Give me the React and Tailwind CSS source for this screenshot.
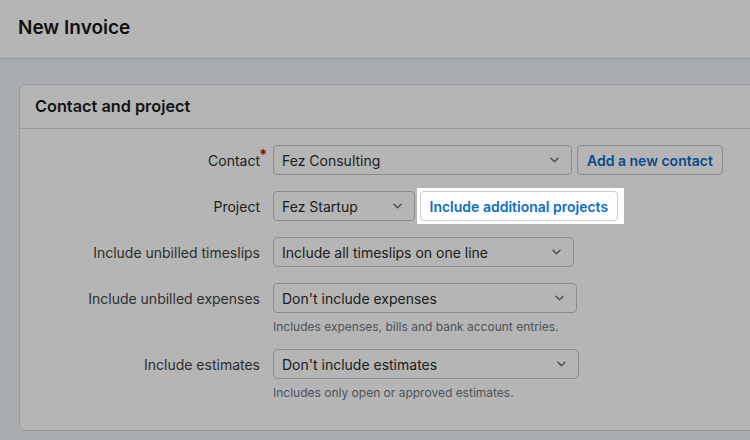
import React from "react";

function Chevron() {
  return (
    <svg width="9" height="6" viewBox="0 0 9 6" fill="none" className="shrink-0">
      <path d="M1 1.2l3.5 3.5 3.5-3.5" stroke="#6f7378" strokeWidth="1.5" strokeLinecap="round" strokeLinejoin="round" />
    </svg>
  );
}

function Select({ value, w }) {
  return (
    <div className={`flex h-[30px] items-center justify-between rounded-[4px] border border-[#c4c6c9] bg-white pl-[8px] pr-[12px] text-[14px] text-[#2b2b2b] ${w}`}>
      <span>{value}</span>
      <Chevron />
    </div>
  );
}

function Label({ children, required }) {
  return (
    <div className="relative w-[240px] shrink-0 text-right text-[14px] text-[#2e2e2e]">
      {children}
      {required && (
        <span className="absolute -right-[7px] -top-[6px] text-[14px] font-bold text-[#c40d0d]">*</span>
      )}
    </div>
  );
}

function Row({ label, required, children, help, className = "" }) {
  return (
    <div className={`flex items-start gap-[13px] ${className}`}>
      <div className="flex h-[30px] items-center">
        <Label required={required}>{label}</Label>
      </div>
      <div className="flex flex-col">
        <div className="flex items-center gap-[5px]">{children}</div>
        {help && (
          <div className="mt-[5px] h-[18px] text-[12px] leading-[18px] text-[#6c7782]">{help}</div>
        )}
      </div>
    </div>
  );
}

export default function App() {
  return (
    <div
      className="relative h-[440px] w-[750px] overflow-hidden bg-[#eff2f7]"
      style={{ fontFamily: "Inter, 'Noto Sans', sans-serif" }}
    >
      <div className="flex h-[59px] items-center border-b border-[#d9dbde] bg-white pb-[1px] pl-[18px]">
        <h1 className="text-[19px] font-semibold text-[#171717]">New Invoice</h1>
      </div>

      <div className="ml-[19px] mt-[25px] w-[760px] rounded-[6px] border border-[#d7dadd] bg-white">
        <div className="flex h-[44px] items-center border-b border-[#d7dadd] pl-[15px]">
          <h2 className="text-[16.3px] font-semibold text-[#1c1c1c]">Contact and project</h2>
        </div>
        <div className="flex flex-col pb-[28px] pt-[16px]">
          <Row label="Contact" required>
            <Select value="Fez Consulting" w="w-[299px]" />
            <button className="h-[30px] rounded-[4px] border border-[#c4c6c9] bg-white px-[9px] text-[14px] font-semibold text-[#0b6cc4]">
              Add a new contact
            </button>
          </Row>
          <Row label="Project" className="mt-[16px]">
            <Select value="Fez Startup" w="w-[142px]" />
            <span className="relative ml-[-0.5px] inline-flex">
              <button className="relative h-[30px] rounded-[4px] border border-[#c9ccd0] bg-white px-[9px] text-[14px] font-semibold text-[#0b6fc8]">
                Include additional projects
              </button>
              <span className="pointer-events-none absolute -bottom-[3px] -left-[3px] -right-[6px] -top-[3px] shadow-[0_0_0_2000px_rgba(0,0,0,0.29)]" />
            </span>
          </Row>
          <Row label="Include unbilled timeslips" className="mt-[16px]">
            <Select value="Include all timeslips on one line" w="w-[301px]" />
          </Row>
          <Row
            label="Include unbilled expenses"
            className="mt-[16px]"
            help="Includes expenses, bills and bank account entries."
          >
            <Select value="Don't include expenses" w="w-[304px]" />
          </Row>
          <Row
            label="Include estimates"
            className="mt-[13px]"
            help="Includes only open or approved estimates."
          >
            <Select value="Don't include estimates" w="w-[306px]" />
          </Row>
        </div>
      </div>
    </div>
  );
}
